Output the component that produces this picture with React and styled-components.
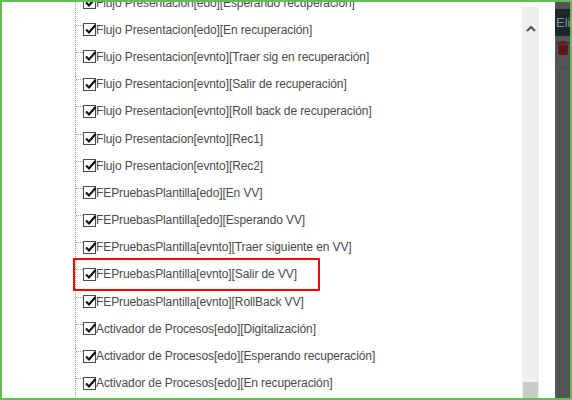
import React from 'react';
import styled, { createGlobalStyle } from 'styled-components';
import { FaTrash } from 'react-icons/fa';

const items = [
  'Flujo Presentacion[edo][Esperando recuperación]',
  'Flujo Presentacion[edo][En recuperación]',
  'Flujo Presentacion[evnto][Traer sig en recuperación]',
  'Flujo Presentacion[evnto][Salir de recuperación]',
  'Flujo Presentacion[evnto][Roll back de recuperación]',
  'Flujo Presentacion[evnto][Rec1]',
  'Flujo Presentacion[evnto][Rec2]',
  'FEPruebasPlantilla[edo][En VV]',
  'FEPruebasPlantilla[edo][Esperando VV]',
  'FEPruebasPlantilla[evnto][Traer siguiente en VV]',
  'FEPruebasPlantilla[evnto][Salir de VV]',
  'FEPruebasPlantilla[evnto][RollBack VV]',
  'Activador de Procesos[edo][Digitalización]',
  'Activador de Procesos[edo][Esperando recuperación]',
  'Activador de Procesos[edo][En recuperación]',
];

const HIGHLIGHTED = 10;

const GlobalStyle = createGlobalStyle`
  html, body {
    margin: 0;
    padding: 0;
    background: #fff;
  }
`;

const Frame = styled.div`
  box-sizing: border-box;
  width: 572px;
  height: 400px;
  border: 2px solid #62bd55;
  display: flex;
  overflow: hidden;
`;

const Dialog = styled.div`
  flex: 1;
  display: flex;
  background: #fff;
  overflow: hidden;
`;

const TreeView = styled.div`
  flex: 1;
  overflow: hidden;
  padding-left: 73px;
`;

const Tree = styled.ul`
  list-style: none;
  margin: -13px 0 0;
  padding: 0;
  border-left: 1px dotted #9a9a9a;
`;

const Row = styled.li`
  display: flex;
  align-items: center;
  width: fit-content;
  height: 27.2px;
  padding-right: ${p => (p.highlighted ? '20px' : '0')};
  outline: ${p => (p.highlighted ? '2px solid #f00' : 'none')};
  outline-offset: 1px;
  font-family: 'Liberation Sans', Arial, sans-serif;
  font-size: 12px;
  letter-spacing: -0.1px;
  color: #4a4a4a;
  white-space: nowrap;
`;

const Connector = styled.span`
  width: 7px;
  height: 11px;
  margin-top: 2px;
  border-top: 1px dotted #9a9a9a;
`;

const Box = styled.span`
  position: relative;
  box-sizing: border-box;
  width: 13px;
  height: 13px;
  border: 1px solid #4a4a4a;
  background: #fff;
  flex-shrink: 0;

  svg {
    position: absolute;
    left: 0;
    top: -1px;
  }
`;

const Scrollbar = styled.div`
  width: 17px;
  margin: 5px 16px 0 0;
  background: #efefef;
  display: flex;
  flex-direction: column;
  align-items: center;
  justify-content: space-between;
`;

const Arrow = styled.div`
  margin-top: 18px;
  line-height: 0;
`;

const Thumb = styled.div`
  width: 15px;
  height: 16px;
  background: #c9c9c9;
`;

const Backdrop = styled.div`
  width: 15px;
  background: #555558;
  overflow: hidden;
  display: flex;
  flex-direction: column;
  padding-top: 7px;
`;

const DarkButton = styled.div`
  height: 27px;
  width: 40px;
  background: #1c2830;
  color: #8a8f93;
  font-family: 'Liberation Sans', Arial, sans-serif;
  font-size: 13px;
  line-height: 27px;
  padding-left: 1px;
`;

const TrashCell = styled.div`
  padding: 5px 0 0 1px;
  color: #5a1b1c;
  font-size: 14px;
  line-height: 0;
`;

const Grid = styled.div`
  flex: 1;
  margin-top: 12px;
  border-top: 1px solid #4d4d50;
  border-left: 1px solid #4d4d50;
  margin-left: 4px;
`;

function Check() {
  return (
    <Box>
      <svg width="13" height="13" viewBox="0 0 13 13">
        <polyline
          points="2,6.5 5,9.5 11.5,2"
          fill="none"
          stroke="#111"
          strokeWidth="2.2"
        />
      </svg>
    </Box>
  );
}

export default function App() {
  return (
    <>
      <GlobalStyle />
      <Frame>
        <Dialog>
          <TreeView>
            <Tree>
              {items.map((label, i) => (
                <Row key={i} highlighted={i === HIGHLIGHTED}>
                  <Connector />
                  <Check />
                  {label}
                </Row>
              ))}
            </Tree>
          </TreeView>
          <Scrollbar>
            <Arrow>
              <svg width="10" height="7" viewBox="0 0 10 7">
                <polyline
                  points="1,6 5,2 9,6"
                  fill="none"
                  stroke="#555"
                  strokeWidth="2.2"
                />
              </svg>
            </Arrow>
            <Thumb />
          </Scrollbar>
        </Dialog>
        <Backdrop>
          <DarkButton>Eliminar</DarkButton>
          <TrashCell>
            <FaTrash />
          </TrashCell>
          <Grid />
        </Backdrop>
      </Frame>
    </>
  );
}
